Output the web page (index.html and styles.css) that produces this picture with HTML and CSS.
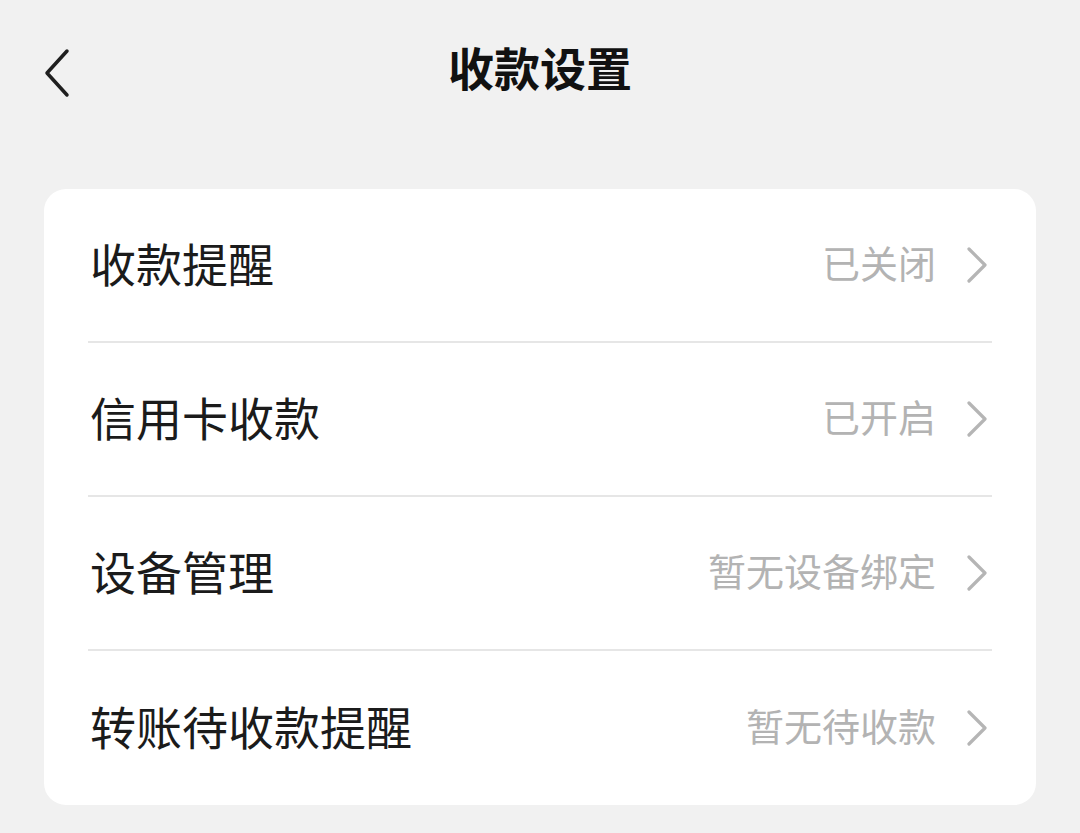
FILE: index.html
```html
<!DOCTYPE html>
<html lang="zh-CN">
<head>
    <meta charset="UTF-8">
    <meta name="viewport" content="width=device-width, initial-scale=1.0">
    <title>收款设置</title>
    <link rel="stylesheet" href="styles.css">
</head>
<body>

<div class="page">
    <!-- Top bar -->
    <div class="topbar">
        <a class="back" href="#">
            <svg width="26" height="50" viewBox="0 0 26 50">
                <polyline points="23,3 3,25 23,47" fill="none" stroke="#1f1f1f" stroke-width="3.5" stroke-linecap="round" stroke-linejoin="round"/>
            </svg>
        </a>
        <div class="title">收款设置</div>
        <div></div>
    </div>

    <!-- Settings list -->
    <div class="card">
        <div class="row">
            <span class="label">收款提醒</span>
            <span class="value">已关闭</span>
            <svg class="chevron" width="26" height="36" viewBox="0 0 26 36">
                <polyline points="3,2 19,18 3,34" fill="none" stroke="#b5b5b5" stroke-width="3.2" stroke-linecap="round" stroke-linejoin="round"/>
            </svg>
        </div>
        <div class="row">
            <span class="label">信用卡收款</span>
            <span class="value">已开启</span>
            <svg class="chevron" width="26" height="36" viewBox="0 0 26 36">
                <polyline points="3,2 19,18 3,34" fill="none" stroke="#b5b5b5" stroke-width="3.2" stroke-linecap="round" stroke-linejoin="round"/>
            </svg>
        </div>
        <div class="row">
            <span class="label">设备管理</span>
            <span class="value">暂无设备绑定</span>
            <svg class="chevron" width="26" height="36" viewBox="0 0 26 36">
                <polyline points="3,2 19,18 3,34" fill="none" stroke="#b5b5b5" stroke-width="3.2" stroke-linecap="round" stroke-linejoin="round"/>
            </svg>
        </div>
        <div class="row">
            <span class="label">转账待收款提醒</span>
            <span class="value">暂无待收款</span>
            <svg class="chevron" width="26" height="36" viewBox="0 0 26 36">
                <polyline points="3,2 19,18 3,34" fill="none" stroke="#b5b5b5" stroke-width="3.2" stroke-linecap="round" stroke-linejoin="round"/>
            </svg>
        </div>
    </div>
</div>

</body>
</html>
```

FILE: styles.css
```css
body {
    margin: 0;
    background-color: #f1f1f1;
    font-family: "Noto Sans CJK SC", "Noto Sans", sans-serif;
    color: #1b1b1b;
}
.page {
    padding: 0 44px;
}
.topbar {
    display: grid;
    grid-template-columns: 1fr auto 1fr;
    align-items: center;
    height: 142px;
}
.back {
    display: flex;
    align-items: center;
    height: 50px;
    margin-top: 4px; /* arrow sits slightly lower than the title */
}
.title {
    font-size: 46px;
    font-weight: 600;
    color: #111;
    line-height: 1;
    margin-top: -10px;
}
.card {
    margin-top: 47px;
    background-color: #fff;
    border-radius: 22px;
    padding: 0 44px;
}
.row {
    display: flex;
    align-items: center;
    height: 154px;
    box-sizing: border-box;
    padding-bottom: 6px;
    border-bottom: 2px solid #e6e6e6;
}
.row:last-child {
    border-bottom: none;
}
.label {
    flex: 1;
    font-size: 46px;
    line-height: 1;
    padding-left: 2px;
}
.value {
    font-size: 38px;
    color: #b3b3b3;
    line-height: 1;
}
.chevron {
    margin-left: 30px;
    margin-top: 6px; /* keep chevron at the row centre */
}
```
